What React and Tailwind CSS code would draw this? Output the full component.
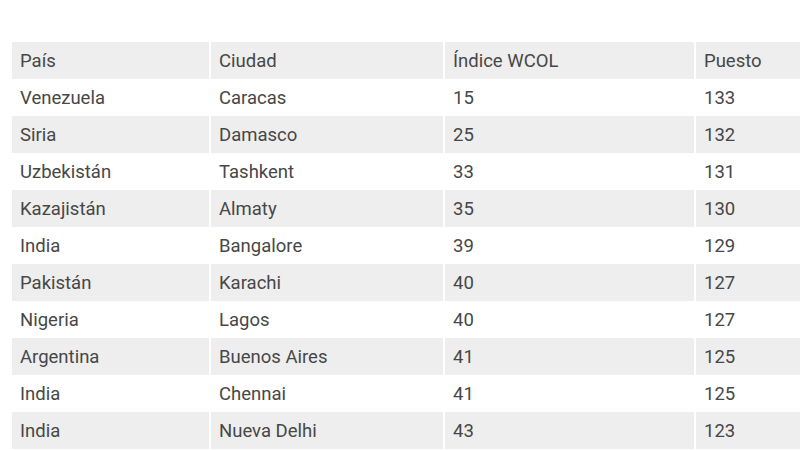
import React from 'react';

const rows = [
    ['Venezuela', 'Caracas', '15', '133'],
    ['Siria', 'Damasco', '25', '132'],
    ['Uzbekistán', 'Tashkent', '33', '131'],
    ['Kazajistán', 'Almaty', '35', '130'],
    ['India', 'Bangalore', '39', '129'],
    ['Pakistán', 'Karachi', '40', '127'],
    ['Nigeria', 'Lagos', '40', '127'],
    ['Argentina', 'Buenos Aires', '41', '125'],
    ['India', 'Chennai', '41', '125'],
    ['India', 'Nueva Delhi', '43', '123'],
];

const Row = ({ cells, shaded }) => (
    <div className="grid grid-cols-[197px_232px_249px_1fr] gap-x-[2px] h-[37px]">
        {cells.map((c, i) => (
            <div
                key={i}
                className={`flex items-center pl-2 pt-[2px] ${shaded ? 'bg-[#eeeeee]' : 'bg-white'}`}
            >
                {c}
            </div>
        ))}
    </div>
);

const App = () => {
    return (
        <div className="w-[800px] h-[450px] overflow-hidden bg-white pt-[42px] pl-[12px] font-['Roboto',sans-serif] text-[18.5px] text-[#474747]">
            <Row cells={['País', 'Ciudad', 'Índice WCOL', 'Puesto']} shaded />
            {rows.map((r, i) => (
                <Row key={i} cells={r} shaded={i % 2 === 1} />
            ))}
        </div>
    );
};

export default App;
